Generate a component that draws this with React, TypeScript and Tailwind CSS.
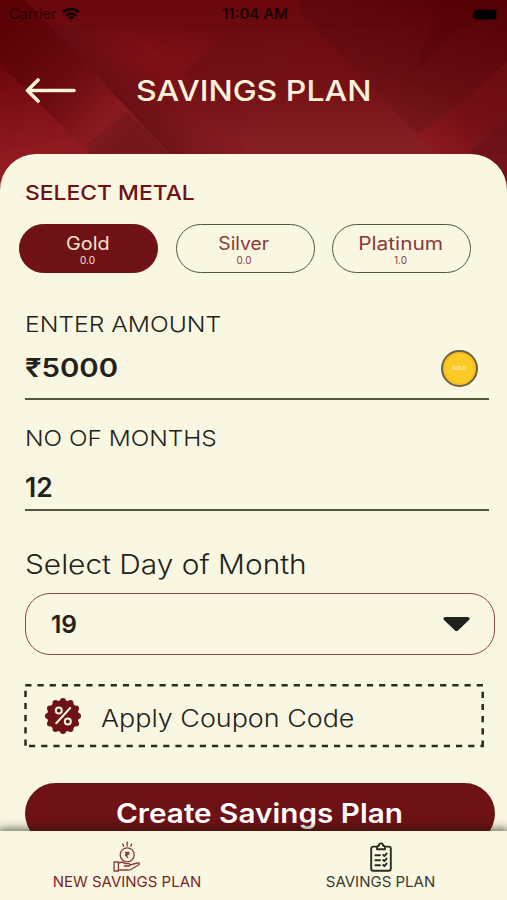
import { useState } from "react";
import clsx from "clsx";

const METALS = [
  { name: "Gold", rate: "0.0", nameClass: "scale-x-[1.1]" },
  { name: "Silver", rate: "0.0", nameClass: "scale-x-[1.07]" },
  { name: "Platinum", rate: "1.0", nameClass: "scale-x-[1.16]" },
];

function HeaderArt() {
  return (
    <svg className="absolute inset-0 h-full w-full" viewBox="0 0 507 200" preserveAspectRatio="none">
      <defs>
        <linearGradient id="base" x1="0" y1="0" x2="0" y2="1">
          <stop offset="0" stopColor="#69070d" />
          <stop offset="0.4" stopColor="#741015" />
          <stop offset="0.75" stopColor="#862024" />
          <stop offset="1" stopColor="#8a1a20" />
        </linearGradient>
        {/* stripe running down to the right, dark at the top and lit near the bottom */}
        <linearGradient id="stripe" gradientUnits="userSpaceOnUse" x1="20" y1="20" x2="130" y2="130">
          <stop offset="0" stopColor="#5c0207" />
          <stop offset="0.5" stopColor="#6b0b10" />
          <stop offset="0.85" stopColor="#8a1a1f" />
          <stop offset="1" stopColor="#7e1a1f" />
        </linearGradient>
        <linearGradient id="leftLit" gradientUnits="userSpaceOnUse" x1="20" y1="60" x2="40" y2="160">
          <stop offset="0" stopColor="#6c060c" />
          <stop offset="1" stopColor="#931c22" />
        </linearGradient>
        <linearGradient id="edge" gradientUnits="userSpaceOnUse" x1="110" y1="90" x2="160" y2="45">
          <stop offset="0" stopColor="#5c0d12" stopOpacity="0.6" />
          <stop offset="1" stopColor="#850f16" stopOpacity="0.1" />
        </linearGradient>
        <linearGradient id="foldUp" gradientUnits="userSpaceOnUse" x1="200" y1="60" x2="290" y2="120">
          <stop offset="0" stopColor="#5d0b10" stopOpacity="0.32" />
          <stop offset="1" stopColor="#781a1f" stopOpacity="0" />
        </linearGradient>
        <linearGradient id="rightDark" gradientUnits="userSpaceOnUse" x1="480" y1="10" x2="430" y2="150">
          <stop offset="0" stopColor="#540106" />
          <stop offset="0.6" stopColor="#650d12" />
          <stop offset="1" stopColor="#7c1a1f" />
        </linearGradient>
        <linearGradient id="floor" gradientUnits="userSpaceOnUse" x1="430" y1="150" x2="480" y2="100">
          <stop offset="0" stopColor="#91191f" />
          <stop offset="1" stopColor="#74090f" stopOpacity="0.5" />
        </linearGradient>
        <radialGradient id="glow" cx="0.3" cy="0.3" r="0.2">
          <stop offset="0" stopColor="#8c1219" stopOpacity="0.55" />
          <stop offset="1" stopColor="#8c1219" stopOpacity="0" />
        </radialGradient>
      </defs>
      <rect width="507" height="200" fill="url(#base)" />
      <rect width="507" height="200" fill="url(#glow)" />
      <path d="M50 26 170 154H255L128 26Z" fill="url(#edge)" />
      <path d="M0 0H25L50 26 170 154H88L0 63Z" fill="url(#stripe)" />
      <path d="M0 63 88 154V200H0Z" fill="url(#leftLit)" />
      <path d="M88 144 127 112 168 154H88Z" fill="#5d1218" opacity=".25" />
      <path d="M185 72 245 18 330 50 262 110 240 154Z" fill="url(#foldUp)" />
      <path d="M300 14 436 154H507V0H300Z" fill="url(#rightDark)" opacity=".85" />
      <path d="M418 134 455 108 480 130 468 154H436Z" fill="url(#floor)" opacity=".8" />
      <path d="M455 108 507 62V120L480 136Z" fill="#7c0f15" opacity=".45" />
      <path d="M415 72 445 40 507 0H440Z" fill="#4c0004" opacity=".2" />
      <path d="M468 154 507 118V200H468Z" fill="#6a1017" opacity=".7" />
      <path d="M0 26H507" stroke="#4c0207" strokeWidth="1" opacity=".2" />
    </svg>
  );
}

function StatusBar() {
  return (
    <div className="relative flex h-7 items-center px-[9px] text-[14.500px] text-black">
      <span className="w-[53px] text-black/60">Carrier</span>
      <svg width="18" height="14" viewBox="0 0 18 14" fill="none" stroke="#140001" strokeWidth="2.6">
        <path d="M1 5.2a11.5 11.5 0 0 1 16 0" />
        <path d="M4 8.6a7.2 7.2 0 0 1 10 0" />
        <path d="M9 13.2 6 10.4a4.2 4.2 0 0 1 6 0Z" fill="#140001" stroke="none" />
      </svg>
      <span className="ml-[142px] w-[66px] whitespace-nowrap text-[15px] font-semibold text-black/75">11:04 AM</span>
      <span className="mr-[2px] ml-auto h-[9px] w-[22px] rounded-[2px] bg-black shadow-[0_0_2px_1px_rgba(0,0,0,0.45)]" />
    </div>
  );
}

function CouponIcon() {
  const points = Array.from({ length: 12 }, (_, i) => {
    const a = (i * Math.PI) / 6;
    return { x: 18 + 15 * Math.sin(a), y: 18 - 15 * Math.cos(a) };
  });
  return (
    <svg width="36" height="36" viewBox="0 0 36 36">
      <circle cx="18" cy="18" r="15.8" fill="#6e1215" />
      {points.map((p, i) => <circle key={i} cx={p.x} cy={p.y} r="3" fill="#6e1215" />)}
      <g fill="none" stroke="#f9f6e1" strokeWidth="2" strokeLinecap="round">
        <path d="M25.2 10 11.2 25.2" />
        <circle cx="13.8" cy="12.4" r="3" />
        <circle cx="22.8" cy="23.6" r="3" />
      </g>
    </svg>
  );
}

function HandCoinIcon() {
  return (
    <svg width="28" height="31" viewBox="0 0 28 31" fill="none" stroke="#8a3a3a" strokeWidth="1.3" strokeLinecap="round" strokeLinejoin="round">
      <path d="M14.200 1v4M9.800 3l.8 2.200M18.600 3l-.8 2.200" />
      <circle cx="14.200" cy="13.800" r="7" />
      <path d="M12.600 11.400h3.400M12.600 13h3.400M12.600 11.400c3 0 3 3 0 3l2.200 2.200" />
      <path d="M1 21h4.400v9H1ZM5.400 22.200c2.400-1.400 4.800-1 6.600.4h3.600c1.800 0 1.800 2.400 0 2.400h-4.400M17 24l7.200-2c2.400-.4 3 .8 1.600 1.800l-7 4.200c-1.200.8-2 1-3.600 1H5.400" />
    </svg>
  );
}

function ClipboardIcon() {
  return (
    <svg width="22" height="31" viewBox="0 0 22 31" fill="none" stroke="#2b2b22" strokeWidth="1.9" strokeLinecap="round" strokeLinejoin="round">
      <path d="M6 5.600H3.200A2 2 0 0 0 1.200 7.600V27.800A2 2 0 0 0 3.200 29.800H18.800A2 2 0 0 0 20.800 27.800V7.600A2 2 0 0 0 18.800 5.600H16" />
      <path d="M7 8.300V5.600L9 4.400A2 2 0 0 1 13 4.400L15 5.600V8.300Z" />
      <path d="M5.400 14.300H10M5.400 19.300H10M5.400 24.300H10M13.200 14l1.200 1.200 2.200-2.600M13.200 19l1.200 1.200 2.200-2.600M13.200 24l1.200 1.200 2.200-2.600" />
    </svg>
  );
}

export default function App() {
  const [metal, setMetal] = useState("Gold");

  return (
    <div className="relative flex h-[900px] w-[507px] flex-col overflow-hidden bg-[#f9f6e2] font-['Inter',sans-serif] text-[#22221a]">
      <header className="relative h-[154px] shrink-0">
        <div className="absolute inset-x-0 top-0 h-[200px]"><HeaderArt /></div>
        <StatusBar />
        <div className="relative flex h-[125px] items-center pl-[25px]">
          <svg width="51" height="26" viewBox="0 0 51 26" fill="none" stroke="#fdf3dc" strokeWidth="3.600" strokeLinecap="round" strokeLinejoin="round">
            <path d="M49 12.500H2.500M13 2 2.500 12.500 13 23" />
          </svg>
          <h1 className="ml-[60px] origin-left scale-x-[1.105] whitespace-nowrap text-[29px] font-medium text-[#fdf3dc]">SAVINGS PLAN</h1>
        </div>
      </header>

      <main className="relative flex h-[677px] shrink-0 flex-col overflow-hidden rounded-t-[36px] bg-[#f9f6e2] pt-[27px]">
        <h2 className="ml-[25px] h-6 origin-left scale-x-[1.115] text-[20.500px] leading-6 font-medium text-[#6e1215]">SELECT METAL</h2>

        <div className="mt-[19px] ml-[19px] flex gap-[17.500px]">
          {METALS.map((m) => (
            <button
              key={m.name}
              onClick={() => setMetal(m.name)}
              className={clsx(
                "flex h-[49px] w-[139px] flex-col items-center rounded-full border-[1.500px] pt-[9px] pr-[2px]",
                metal === m.name ? "border-[#6e1215] bg-[#6e1215] text-[#fbe3cf]" : "border-[#55553f] text-[#8a3a3a]",
              )}
            >
              <span className={clsx("h-5 text-[18px] leading-5", m.nameClass)}>{m.name}</span>
              <span className="h-3 text-[10px] leading-3">{m.rate}</span>
            </button>
          ))}
        </div>

        <div className="mx-[25px] mt-[39px] flex h-[88px] w-[464px] shrink-0 flex-col border-b-2 border-[#55553f]">
          <label className="h-6 origin-left scale-x-[1.12] text-[22px] leading-6 font-light">ENTER AMOUNT</label>
          <div className="mt-[13px] flex h-[38px] items-center justify-between pr-[11px]">
            <span className="mb-[2px] origin-left scale-x-[1.13] text-[26px] font-semibold">₹5000</span>
            <span className="flex h-[37px] w-[37px] items-center justify-center rounded-full border-2 border-[#6b6242] bg-[#fbca26] pt-[2px] text-[5px] font-bold text-[#fff0a8] shadow-[inset_0_0_0_2px_#f8bd1c]">GOLD</span>
          </div>
        </div>

        <div className="mx-[25px] mt-[26px] flex h-[85px] w-[464px] shrink-0 flex-col border-b-2 border-[#55553f]">
          <label className="h-6 origin-left scale-x-[1.11] text-[22px] leading-6 font-light">NO OF MONTHS</label>
          <span className="mt-[21px] h-8 origin-left text-[26.500px] leading-8 font-semibold">12</span>
        </div>

        <label className="mt-[38px] ml-[25px] h-8 origin-left scale-x-[1.105] text-[27px] leading-8 font-light">Select Day of Month</label>
        <div className="mt-[12px] ml-[25px] flex h-[62px] w-[470px] shrink-0 items-center justify-between rounded-[25px] border-[1.500px] border-[#8f4545] pr-[24px] pl-[25px]">
          <span className="origin-left text-[24.500px] font-semibold">19</span>
          <svg width="27" height="15" viewBox="0 0 27 15"><path d="M2 0H25Q28 1 25.500 3.500L15 13.500Q13.500 15 12 13.500L1.500 3.500Q-1 1 2 0Z" fill="#20201c" /></svg>
        </div>

        <div className="relative mt-[29px] ml-[24px] flex h-[64px] w-[461px] shrink-0 items-center pl-[21px]">
          <svg className="absolute inset-0" width="461" height="64" viewBox="0 0 461 64" stroke="#2b2b1e" strokeWidth="2.500" strokeDasharray="6.200 6">
            <path d="M1.300 1.300H460" />
            <path d="M458.700 7.700V63" />
            <path d="M5 62H460" />
            <path d="M1.500 6.700V63" />
          </svg>
          <CouponIcon />
          <span className="ml-[20px] mt-[5px] origin-left scale-x-[1.12] whitespace-nowrap text-[24px] font-light">Apply Coupon Code</span>
        </div>

        <button className="mt-[35px] ml-[25px] flex h-[61px] w-[470px] shrink-0 items-center justify-center rounded-[31px] bg-[#6e1215] pt-[2px] pr-[2px] text-[27px] font-semibold text-white">
          <span className="scale-x-[1.1]">Create Savings Plan</span>
        </button>
      </main>

      <nav className="relative flex h-[69px] shrink-0 bg-[#f9f6e2] text-[15px] shadow-[0_0_9px_2px_rgba(20,20,10,0.65)]">
        <button className="flex w-[254px] flex-col items-center pt-[10px] text-[#7c2528]">
          <HandCoinIcon />
          <span className="mt-[1px] leading-[18px]">NEW SAVINGS PLAN</span>
        </button>
        <button className="flex w-[253px] flex-col items-center pt-[10px] text-[#3a3a2e]">
          <ClipboardIcon />
          <span className="mt-[1px] leading-[18px]">SAVINGS PLAN</span>
        </button>
      </nav>
    </div>
  );
}
